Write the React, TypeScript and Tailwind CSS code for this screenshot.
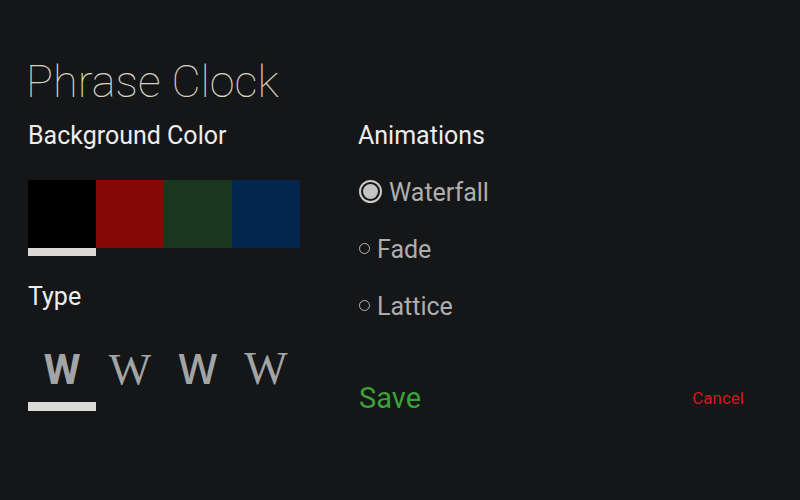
import React from "react";

const swatches = ["#000000", "#850805", "#1b361e", "#03264f"];

export default function App() {
  return (
    <div
      className="w-[800px] h-[500px] bg-[#151618] pl-[28px] pt-[58px] overflow-hidden"
      style={{ fontFamily: "Roboto, 'Liberation Sans', sans-serif" }}
    >
      <h1 className="text-[45px] leading-[48px] h-[48px] font-thin text-[#d8d3c1] -ml-[2px]">
        Phrase Clock
      </h1>
      <div className="flex">
        <div className="w-[330px] flex flex-col">
          <div className="mt-[16px] text-[25px] leading-[28px] text-[#ededed]">Background Color</div>
          <div className="mt-[30px] flex">
            {swatches.map((c) => (
              <div key={c} className="w-[68px] h-[68px]" style={{ background: c }} />
            ))}
          </div>
          <div className="w-[68px] h-[8px] bg-[#dcdad5]" />
          <div className="mt-[27px] text-[25px] leading-[28px] text-[#ededed]">Type</div>
          <div className="mt-[32px] flex items-baseline text-[#a2a5a5] leading-[50px]">
            <div className="w-[68px] flex justify-center text-[42px] font-bold" style={{ fontFamily: "Roboto, sans-serif" }}>W</div>
            <div className="w-[68px] flex justify-center text-[45px]" style={{ fontFamily: "'Liberation Serif', serif" }}>W</div>
            <div className="w-[68px] flex justify-center text-[41px] font-semibold" style={{ fontFamily: "'Open Sans', sans-serif" }}>W</div>
            <div className="w-[68px] flex justify-center text-[46px]" style={{ fontFamily: "'Liberation Serif', serif" }}>W</div>
          </div>
          <div className="mt-[7px] w-[68px] h-[9px] bg-[#dcdad5]" />
        </div>
        <div className="flex flex-col">
          <div className="mt-[16px] text-[25px] leading-[28px] text-[#ededed]">Animations</div>
          <div className="mt-[14px] flex flex-col text-[25px] text-[#aeaeae]">
            <div className="h-[57px] leading-[57px] flex items-center">
              <span className="mb-[3px] ml-[1px] w-[23px] h-[23px] rounded-full border-2 border-[#c9c9c9] flex items-center justify-center">
                <span className="w-[15px] h-[15px] rounded-full bg-[#c4c4c4]" />
              </span>
              <span className="ml-[7px]">Waterfall</span>
            </div>
            <div className="h-[57px] leading-[57px] flex items-center">
              <span className="mb-[3px] ml-[1px] w-[11px] h-[11px] rounded-full border-[1.5px] border-[#b5b5b5]" />
              <span className="ml-[7px]">Fade</span>
            </div>
            <div className="h-[57px] leading-[57px] flex items-center">
              <span className="mb-[3px] ml-[1px] w-[11px] h-[11px] rounded-full border-[1.5px] border-[#b5b5b5]" />
              <span className="ml-[7px]">Lattice</span>
            </div>
          </div>
          <div className="mt-[49px] w-[386px] flex justify-between items-start">
            <span className="ml-[1px] text-[29px] leading-[28px] text-[#3da236]">Save</span>
            <span className="text-[17px] leading-[28px] text-[#d2191c]">Cancel</span>
          </div>
        </div>
      </div>
    </div>
  );
}
